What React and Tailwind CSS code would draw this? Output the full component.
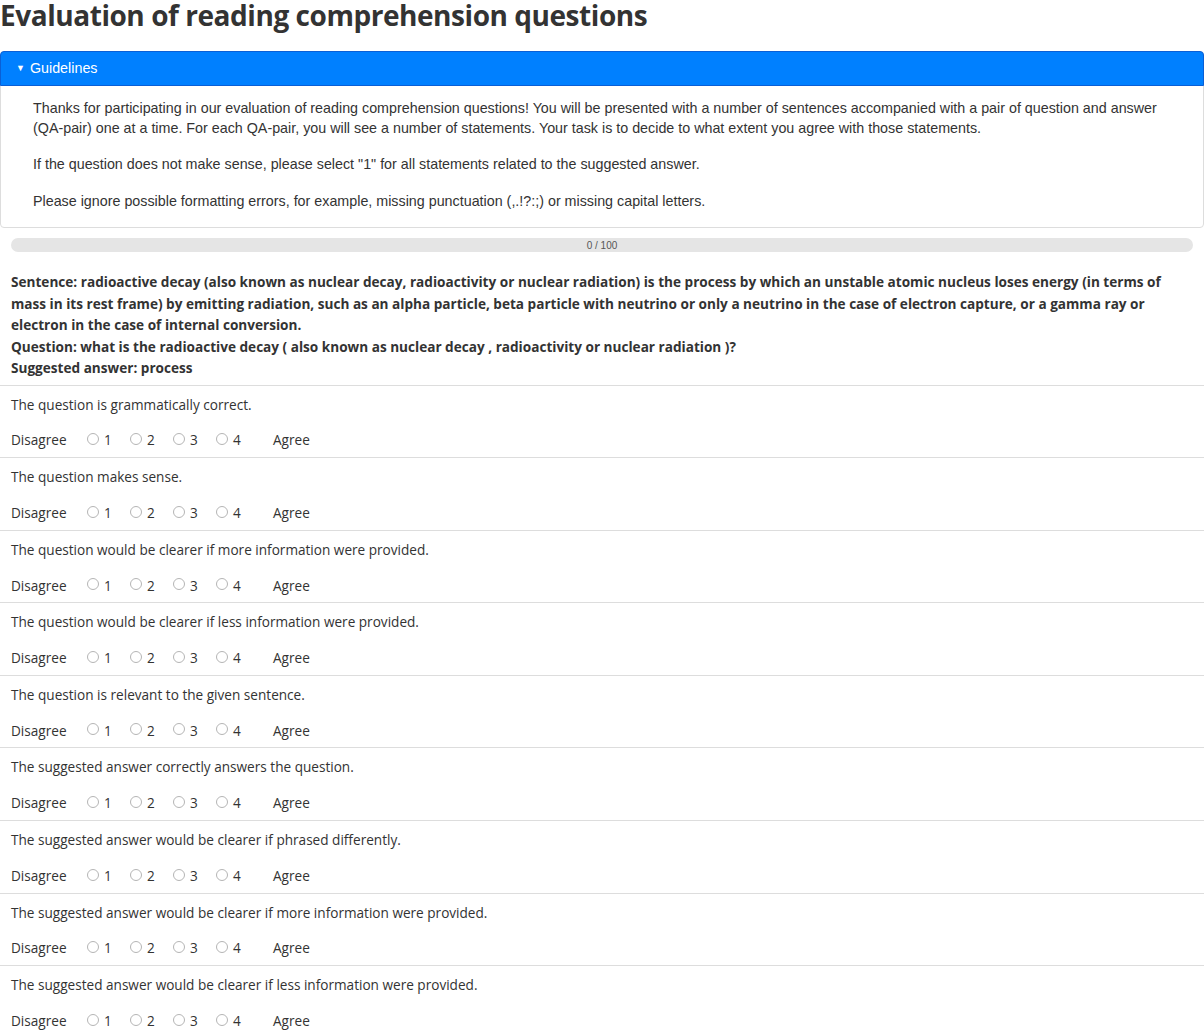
import React from 'react';

const statements = [
  'The question is grammatically correct.',
  'The question makes sense.',
  'The question would be clearer if more information were provided.',
  'The question would be clearer if less information were provided.',
  'The question is relevant to the given sentence.',
  'The suggested answer correctly answers the question.',
  'The suggested answer would be clearer if phrased differently.',
  'The suggested answer would be clearer if more information were provided.',
  'The suggested answer would be clearer if less information were provided.',
];

function Scale({ name }) {
  return (
    <div className="flex items-center h-[20px]">
      <span className="w-[76px]">Disagree</span>
      {[1, 2, 3, 4].map((n) => (
        <label key={n} className="flex items-center w-[43px]">
          <input
            type="radio"
            name={name}
            className="appearance-none w-[12px] h-[12px] m-0 mr-[5px] rounded-full border border-[#b5b5b5] bg-white -mt-[3px]"
          />
          <span>{n}</span>
        </label>
      ))}
      <span className="ml-[14px]">Agree</span>
    </div>
  );
}

export default function App() {
  return (
    <div className="text-[#333] text-[14px] font-['Open_Sans',sans-serif] bg-white">
      <h1 className="text-[28px] leading-[30px] font-bold mb-[21px] tracking-[-0.45px]">
        Evaluation of reading comprehension questions
      </h1>

      {/* Guidelines */}
      <div className="border border-[#ddd] rounded-[4px] font-['Liberation_Sans',sans-serif]">
        <div className="bg-[#0080ff] border border-[#0a5fd6] -m-px rounded-t-[4px] h-[35px] flex items-center pl-[15px] text-white text-[14.3px]">
          <span className="text-[9px] mr-[5px]">▼</span>
          <span>Guidelines</span>
        </div>
        <div className="px-[32px] pt-[14px] pb-[16px] leading-[19.5px] text-[14.3px]">
          <p className="mb-[17px]">
            Thanks for participating in our evaluation of reading comprehension questions! You will be presented with a number of sentences accompanied with a pair of question and answer (QA-pair) one at a time. For each QA-pair, you will see a number of statements. Your task is to decide to what extent you agree with those statements.
          </p>
          <p className="mb-[17px]">
            If the question does not make sense, please select "1" for all statements related to the suggested answer.
          </p>
          <p>
            Please ignore possible formatting errors, for example, missing punctuation (,.!?:;) or missing capital letters.
          </p>
        </div>
      </div>

      {/* Progress */}
      <div className="mx-[11px] mt-[10px] h-[14px] rounded-full bg-[#e5e5e5] flex items-center justify-center text-[10px] text-[#555] font-['Liberation_Sans',sans-serif]">
        0 / 100
      </div>

      <div className="px-[11px] pt-[19px] pb-[6px] font-bold leading-[21.5px] text-[13.6px]">
        <div>
          Sentence: radioactive decay (also known as nuclear decay, radioactivity or nuclear radiation) is the process by which an unstable atomic nucleus loses energy (in terms of mass in its rest frame) by emitting radiation, such as an alpha particle, beta particle with neutrino or only a neutrino in the case of electron capture, or a gamma ray or electron in the case of internal conversion.
        </div>
        <div>Question: what is the radioactive decay ( also known as nuclear decay , radioactivity or nuclear radiation )?</div>
        <div>Suggested answer: process</div>
      </div>

      {statements.map((s, i) => (
        <div key={i} className="border-t border-[#ddd] px-[11px] pt-[9px] h-[72.6px] text-[13.6px]">
          <div className="leading-[20px]">{s}</div>
          <div className="mt-[16px]">
            <Scale name={`q${i}`} />
          </div>
        </div>
      ))}
    </div>
  );
}
